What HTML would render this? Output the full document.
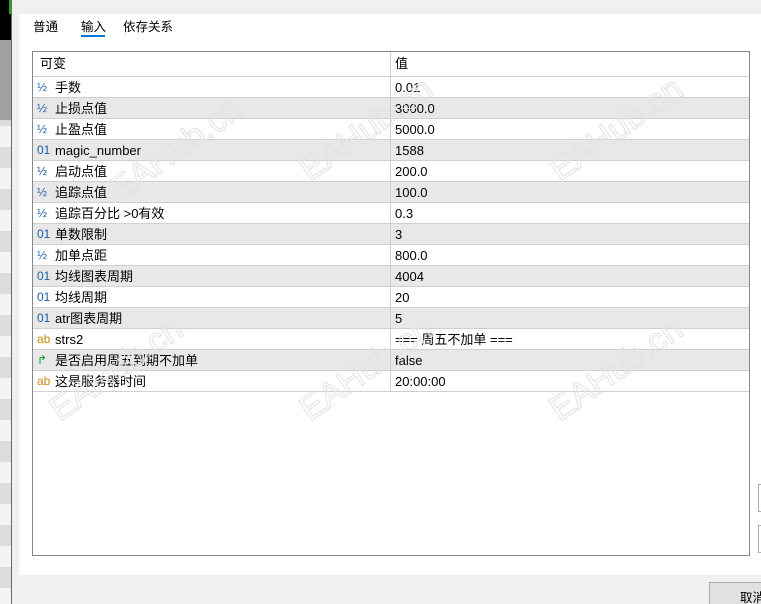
<!DOCTYPE html>
<html style="overflow:hidden;width:761px;height:604px"><head><meta charset="utf-8"><style>
*{margin:0;padding:0;box-sizing:border-box}
body{width:761px;height:604px;overflow:hidden;background:#f0f0f0;position:relative;font-family:"Liberation Sans","Noto Sans CJK SC",sans-serif;font-size:13px;color:#000}
.strip{position:absolute;left:0;top:0;width:12px;height:604px;border-right:1px solid #6a6a6a;background:repeating-linear-gradient(#f4f4f4 0,#f4f4f4 21px,#dcdcdc 21px,#dcdcdc 42px)}
.panel{position:absolute;left:19px;top:14px;width:742px;height:561px;background:#fff}
.tab{position:absolute;top:16px;font-size:12.5px}
.ul{position:absolute;left:81px;top:35px;width:24px;height:2px;background:#0078d7}
.tbl{position:absolute;left:32px;top:51px;width:718px;height:505px;border:1px solid #828790;background:#fff;overflow:hidden}
.row{position:absolute;left:0;width:716px;height:21px;border-bottom:1px solid #d0d0d0;line-height:21px}
.row.g{background:#e8e8e8}
.c1{position:absolute;left:22px}
.c2{position:absolute;left:362px}
.ic{position:absolute;left:4px;font-size:12px}
.vl{position:absolute;left:357px;top:0;width:1px;height:340px;background:#d0d0d0;z-index:1}
.btn{position:absolute;left:709px;top:582px;width:60px;height:24px;border:1px solid #adadad;background:#e1e1e1;padding:4px 0 0 30px;font-size:12.5px}
.sb{position:absolute;left:758px;width:5px;height:28px;border:1px solid #adadad;background:#fff}
.wm{position:absolute;font-size:34px;color:transparent;-webkit-text-stroke:1px #e2e2e2;transform:rotate(-35deg);font-family:"Liberation Sans",sans-serif;white-space:nowrap}
</style></head><body>
<div class="strip"></div>
<div style="position:absolute;left:0;top:0;width:11px;height:40px;background:#000"></div>
<div style="position:absolute;left:9px;top:0;width:2px;height:14px;background:#2a2"></div>
<div style="position:absolute;left:0;top:40px;width:11px;height:80px;background:#a0a0a0"></div>
<div class="panel"></div>
<div class="tab" style="left:33px">普通</div>
<div class="tab" style="left:81px">输入</div>
<div class="tab" style="left:123px">依存关系</div>
<div class="ul"></div>
<div class="tbl">
<div class="vl"></div>
<div class="row" style="top:0;height:25px;line-height:24px"><span class="c1" style="left:7px">可变</span><span class="c2">值</span></div>
<div class="row" style="top:25px"><span class="ic" style="color:#1e5fa8">½</span><span class="c1">手数</span><span class="c2">0.01</span></div>
<div class="row g" style="top:46px"><span class="ic" style="color:#1e5fa8">½</span><span class="c1">止损点值</span><span class="c2">3000.0</span></div>
<div class="row" style="top:67px"><span class="ic" style="color:#1e5fa8">½</span><span class="c1">止盈点值</span><span class="c2">5000.0</span></div>
<div class="row g" style="top:88px"><span class="ic" style="color:#1e5fa8">01</span><span class="c1">magic_number</span><span class="c2">1588</span></div>
<div class="row" style="top:109px"><span class="ic" style="color:#1e5fa8">½</span><span class="c1">启动点值</span><span class="c2">200.0</span></div>
<div class="row g" style="top:130px"><span class="ic" style="color:#1e5fa8">½</span><span class="c1">追踪点值</span><span class="c2">100.0</span></div>
<div class="row" style="top:151px"><span class="ic" style="color:#1e5fa8">½</span><span class="c1">追踪百分比 &gt;0有效</span><span class="c2">0.3</span></div>
<div class="row g" style="top:172px"><span class="ic" style="color:#1e5fa8">01</span><span class="c1">单数限制</span><span class="c2">3</span></div>
<div class="row" style="top:193px"><span class="ic" style="color:#1e5fa8">½</span><span class="c1">加单点距</span><span class="c2">800.0</span></div>
<div class="row g" style="top:214px"><span class="ic" style="color:#1e5fa8">01</span><span class="c1">均线图表周期</span><span class="c2">4004</span></div>
<div class="row" style="top:235px"><span class="ic" style="color:#1e5fa8">01</span><span class="c1">均线周期</span><span class="c2">20</span></div>
<div class="row g" style="top:256px"><span class="ic" style="color:#1e5fa8">01</span><span class="c1">atr图表周期</span><span class="c2">5</span></div>
<div class="row" style="top:277px"><span class="ic" style="color:#c98a10">ab</span><span class="c1">strs2</span><span class="c2">=== 周五不加单 ===</span></div>
<div class="row g" style="top:298px"><span class="ic" style="color:#1a9a2a">↱</span><span class="c1">是否启用周五到期不加单</span><span class="c2">false</span></div>
<div class="row" style="top:319px"><span class="ic" style="color:#c98a10">ab</span><span class="c1">这是服务器时间</span><span class="c2">20:00:00</span></div>
</div>
<div class="wm" style="left:100px;top:130px">EAHub.cn</div>
<div class="wm" style="left:290px;top:110px">EAHub.cn</div>
<div class="wm" style="left:540px;top:110px">EAHub.cn</div>
<div class="wm" style="left:40px;top:350px">EAHub.cn</div>
<div class="wm" style="left:290px;top:350px">EAHub.cn</div>
<div class="wm" style="left:540px;top:350px">EAHub.cn</div>
<div class="sb" style="top:484px"></div>
<div class="sb" style="top:525px"></div>
<div class="btn">取消</div>
</body></html>
